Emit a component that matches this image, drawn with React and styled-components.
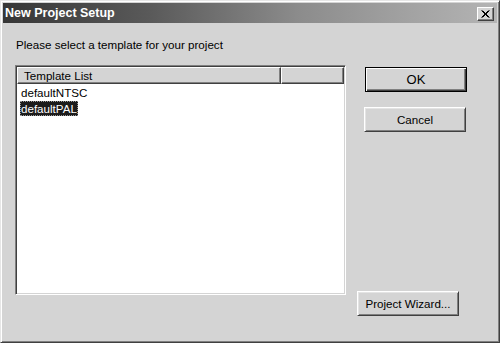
import React from 'react';
import styled, { createGlobalStyle } from 'styled-components';

const Global = createGlobalStyle`
  html, body { margin: 0; padding: 0; width: 500px; height: 343px; overflow: hidden; background: #d4d4d4; }
  #root { width: 500px; height: 343px; }
`;

const Window = styled.div`
  box-sizing: border-box;
  width: 500px;
  height: 343px;
  background: #d4d4d4;
  border: 1px solid;
  border-color: #e6e6e6 #404040 #404040 #e6e6e6;
  box-shadow: inset 1px 1px 0 #ffffff, inset -1px -1px 0 #808080;
  padding: 2px;
  display: flex;
  flex-direction: column;
  font-family: "Liberation Sans", Arial, sans-serif;
  font-size: 11.6px;
  color: #000;
`;

const TitleBar = styled.div`
  height: 20px;
  flex: none;
  display: flex;
  align-items: center;
  justify-content: space-between;
  padding: 0 3px 0 2px;
  background: linear-gradient(to right, #363636 0%, #5a5a5a 30%, #8c8c8c 60%, #b4b4b4 100%);
`;

const Title = styled.span`
  color: #fff;
  font-weight: bold;
  font-size: 12.5px;
`;

const CloseButton = styled.div`
  box-sizing: border-box;
  width: 17px;
  height: 14px;
  background: #d4d4d4;
  border: 1px solid;
  border-color: #ffffff #404040 #404040 #ffffff;
  box-shadow: inset -1px -1px 0 #808080;
  display: flex;
  align-items: center;
  justify-content: center;
  margin-top: 1px;
`;

const Body = styled.div`
  flex: 1;
  padding: 15px 12px 0 12px;
  display: flex;
  flex-direction: column;
`;

const Prompt = styled.div`
  line-height: 13px;
  height: 13px;
  padding-left: 1px;
`;

const Content = styled.div`
  margin-top: 14px;
  display: flex;
  align-items: flex-start;
  gap: 11px;
`;

const ListBox = styled.div`
  box-sizing: border-box;
  width: 331px;
  height: 230px;
  background: #fff;
  border: 1px solid;
  border-color: #808080 #ffffff #ffffff #808080;
  box-shadow: inset 1px 1px 0 #404040, inset -1px -1px 0 #d4d4d4;
  padding: 1px;
  display: flex;
  flex-direction: column;
`;

const Header = styled.div`
  display: flex;
  height: 17px;
  flex: none;
`;

const HeaderCell = styled.div`
  box-sizing: border-box;
  width: ${p => p.$w ? `${p.$w}px` : 'auto'};
  flex: ${p => p.$w ? 'none' : '1'};
  height: 17px;
  background: #d4d4d4;
  border: 1px solid;
  border-color: #ffffff #404040 #404040 #ffffff;
  box-shadow: inset -1px -1px 0 #808080;
  padding-left: 6px;
  line-height: 15px;
`;

const Rows = styled.div`
  padding: 1px 0 0 3px;
  display: flex;
  flex-direction: column;
  align-items: flex-start;
`;

const Row = styled.div`
  height: 15px;
  line-height: 15px;
  padding: 0 1px;
  background: ${p => p.$selected ? '#1c1c1c' : 'transparent'};
  color: ${p => p.$selected ? '#fff' : '#000'};
  outline: ${p => p.$selected ? '1px dotted #9a9a9a' : 'none'};
  outline-offset: -1px;
  margin-top: ${p => p.$selected ? '1px' : '0'};
`;

const Side = styled.div`
  display: flex;
  flex-direction: column;
  align-items: flex-start;
  height: 251px;
  padding-top: 2px;
  box-sizing: border-box;
`;

const Button = styled.div`
  box-sizing: border-box;
  width: 102px;
  height: 25px;
  margin-left: ${p => p.$offset || 0}px;
  margin-top: ${p => p.$top === 'auto' ? 'auto' : `${p.$top || 0}px`};
  background: #d4d4d4;
  border: 1px solid;
  border-color: ${p => p.$default ? '#000' : '#ffffff #404040 #404040 #ffffff'};
  box-shadow: ${p => p.$default
    ? 'inset 1px 1px 0 #ffffff, inset -1px -1px 0 #404040, inset -2px -2px 0 #808080'
    : 'inset 1px 1px 0 #e4e4e4, inset -1px -1px 0 #808080'};
  display: flex;
  align-items: center;
  justify-content: center;
  font-size: ${p => p.$big ? 13 : 11.6}px;
`;

export default function App() {
  return (
    <>
      <Global />
      <Window>
        <TitleBar>
          <Title>New Project Setup</Title>
          <CloseButton>
            <svg width="9" height="8" viewBox="0 0 9 8">
              <path d="M0.5 0.5 L7.5 7.5 M1.5 0.5 L8.5 7.5 M7.5 0.5 L0.5 7.5 M8.5 0.5 L1.5 7.5" stroke="#000" strokeWidth="1" />
            </svg>
          </CloseButton>
        </TitleBar>
        <Body>
          <Prompt>Please select a template for your project</Prompt>
          <Content>
            <ListBox>
              <Header>
                <HeaderCell $w={264}>Template List</HeaderCell>
                <HeaderCell />
              </Header>
              <Rows>
                <Row>defaultNTSC</Row>
                <Row $selected>defaultPAL</Row>
              </Rows>
            </ListBox>
            <Side>
              <Button $default $offset={8} $big>OK</Button>
              <Button $offset={7} $top={15}>Cancel</Button>
              <Button $top="auto">Project Wizard...</Button>
            </Side>
          </Content>
        </Body>
      </Window>
    </>
  );
}
